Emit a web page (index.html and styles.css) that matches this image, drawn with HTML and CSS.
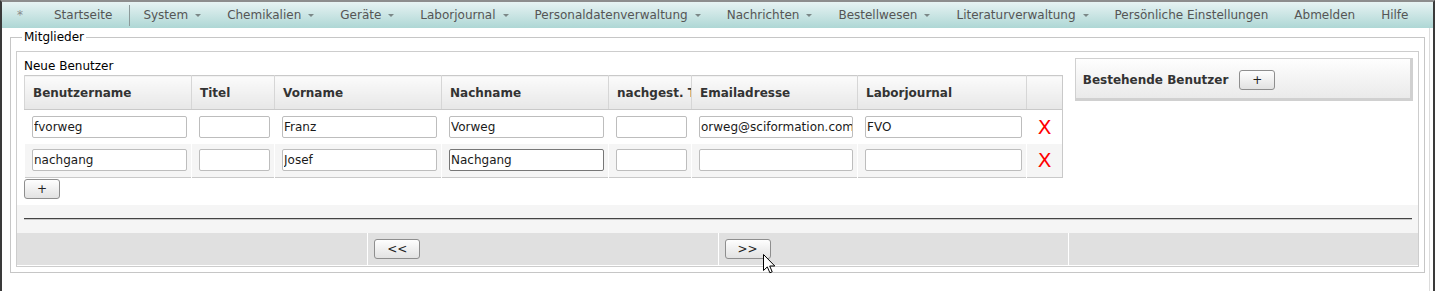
FILE: index.html
```html
<!DOCTYPE html>
<html lang="de">
<head>
    <meta charset="UTF-8">
    <title>Mitglieder</title>
    <link rel="stylesheet" href="styles.css">
</head>
<body>
    <div class="window">
        <div class="menubar">
            <span class="menu-item star">*</span>
            <span class="menu-item home">Startseite</span>
            <span class="menu-item">System<i class="caret"></i></span>
            <span class="menu-item">Chemikalien<i class="caret"></i></span>
            <span class="menu-item">Geräte<i class="caret"></i></span>
            <span class="menu-item">Laborjournal<i class="caret"></i></span>
            <span class="menu-item">Personaldatenverwaltung<i class="caret"></i></span>
            <span class="menu-item">Nachrichten<i class="caret"></i></span>
            <span class="menu-item">Bestellwesen<i class="caret"></i></span>
            <span class="menu-item">Literaturverwaltung<i class="caret"></i></span>
            <span class="menu-item">Persönliche Einstellungen</span>
            <span class="menu-item">Abmelden</span>
            <span class="menu-item">Hilfe</span>
        </div>

        <fieldset class="members">
            <legend>Mitglieder</legend>
            <div class="member-grid">
                <div class="new-users">
                    <div class="caption">Neue Benutzer</div>
                    <table class="user-table">
                        <colgroup>
                            <col style="width:167px">
                            <col style="width:83px">
                            <col style="width:167px">
                            <col style="width:167px">
                            <col style="width:83px">
                            <col style="width:166px">
                            <col style="width:169px">
                            <col style="width:36px">
                        </colgroup>
                        <thead>
                            <tr>
                                <th>Benutzername</th>
                                <th>Titel</th>
                                <th>Vorname</th>
                                <th>Nachname</th>
                                <th>nachgest. Titel</th>
                                <th>Emailadresse</th>
                                <th>Laborjournal</th>
                                <th></th>
                            </tr>
                        </thead>
                        <tbody>
                            <tr>
                                <td><input type="text" value="fvorweg"></td>
                                <td><input type="text" value=""></td>
                                <td><input type="text" value="Franz"></td>
                                <td><input type="text" value="Vorweg"></td>
                                <td><input type="text" value=""></td>
                                <td><input type="text" value="orweg@sciformation.com"></td>
                                <td><input type="text" value="FVO"></td>
                                <td class="remove">X</td>
                            </tr>
                            <tr class="row-alt">
                                <td><input type="text" value="nachgang"></td>
                                <td><input type="text" value=""></td>
                                <td><input type="text" value="Josef"></td>
                                <td><input type="text" class="focused" value="Nachgang"></td>
                                <td><input type="text" value=""></td>
                                <td><input type="text" value=""></td>
                                <td><input type="text" value=""></td>
                                <td class="remove">X</td>
                            </tr>
                        </tbody>
                    </table>
                    <button type="button" class="btn btn-add">+</button>
                </div>

                <div class="existing">
                    <div class="existing-box">
                        <span class="existing-title">Bestehende Benutzer</span>
                        <button type="button" class="btn btn-add">+</button>
                    </div>
                </div>

                <div class="rule-row"><hr></div>

                <div class="pager-cell first"></div>
                <div class="pager-cell"><button type="button" class="btn btn-page">&lt;&lt;</button></div>
                <div class="pager-cell"><button type="button" class="btn btn-page">&gt;&gt;</button></div>
                <div class="pager-cell"></div>
            </div>
        </fieldset>
    </div>

    <svg class="pointer" width="13" height="20" viewBox="0 0 13 20">
        <path d="M0.5 0.5 L0.5 16.5 L4.3 12.9 L6.9 18.8 L9.2 17.8 L6.7 12 L11.8 12 Z" fill="#fff" stroke="#000" stroke-width="1"/>
    </svg>
</body>
</html>
```

FILE: styles.css
```css
* {
    box-sizing: border-box;
}
body {
    margin: 0;
    font-family: "DejaVu Sans", Verdana, sans-serif;
    font-size: 12px;
    color: #111;
    background-color: #fff;
    position: relative;
}
.window {
    height: 291px;
    border-top: 2px solid #8d8d8d;
    border-left: 2px solid #3a3a3a;
    border-right: 2px solid #3a3a3a;
    box-shadow: inset -3px 0 0 #fff, inset -4px 0 0 #dcdcdc;
    overflow: hidden;
}

/* top menu */
.menubar {
    display: flex;
    align-items: center;
    height: 26px;
    padding-left: 2px;
    background: linear-gradient(#e7f3f3, #aed7d5);
    color: #555;
}
.menu-item {
    padding: 0 13px;
    line-height: 26px;
    white-space: nowrap;
}
.menu-item.star {
    padding: 0 18px 0 13px;
    color: #8a8a8a;
}
.menu-item.home {
    line-height: 21px;
    padding-right: 17px;
    border-right: 1px solid #8c9a9a;
}
.caret {
    display: inline-block;
    margin-left: 7px;
    vertical-align: middle;
    border-top: 3px solid #7b8787;
    border-left: 3px solid transparent;
    border-right: 3px solid transparent;
}

/* fieldset */
.members {
    margin: 2px 8px 0 8px;
    padding: 7px 5px 5px 5px;
    border: 1px solid #c6c6c6;
    min-width: 0;
}
.members legend {
    margin-left: 6px;
    padding: 0 2px;
    line-height: 14px;
    color: #000;
}
.member-grid {
    display: grid;
    grid-template-columns: repeat(4, 1fr);
    border: 1px solid #cdcdcd;
}
.new-users {
    grid-column: span 3;
    padding: 7px 0 6px 7px;
}
.caption {
    line-height: 14px;
    margin-bottom: 2px;
    color: #000;
}

/* users table */
.user-table {
    border-collapse: collapse;
    table-layout: fixed;
    width: 1039px;
    border: 1px solid #c9c9c9;
}
.user-table th {
    height: 34px;
    padding: 1px 8px 0 8px;
    text-align: left;
    font-weight: bold;
    color: #333;
    white-space: nowrap;
    overflow: hidden;
    background: linear-gradient(#fbfbfb, #e7e7e7);
    border-left: 1px solid #d6d6d6;
    border-bottom: 1px solid #c9c9c9;
}
.user-table td {
    height: 34px;
    padding: 0 4px 0 7px;
    border-left: 1px solid #fff;
    vertical-align: middle;
}
.user-table .row-alt td {
    background-color: #f5f5f5;
}
.user-table input {
    display: block;
    width: 100%;
    height: 22px;
    padding: 0 0 0 1px;
    border: 1px solid #bdbdbd;
    border-radius: 2px;
    background-color: #fff;
    font-family: "DejaVu Sans", Verdana, sans-serif;
    font-size: 12px;
    color: #1a1a1a;
    outline: none;
}
.user-table input.focused {
    border-color: #777;
}
.user-table td.remove {
    padding: 0;
    text-align: center;
    font-size: 20px;
    line-height: 1;
    color: #f00;
}

/* buttons */
.btn {
    height: 20px;
    padding: 0;
    border: 1px solid #8e8e8e;
    border-radius: 3px;
    background: linear-gradient(#fefefe, #e2e2e2);
    font-family: "DejaVu Sans", Verdana, sans-serif;
    font-size: 12px;
    color: #222;
    cursor: pointer;
}
.btn-add {
    display: block;
    width: 36px;
}
.new-users .btn-add {
    margin-top: 1px;
}
.btn-page {
    width: 46px;
}

/* existing users */
.existing {
    padding: 6px 5px 0 7px;
}
.existing-box {
    display: flex;
    align-items: center;
    gap: 11px;
    padding: 11px 8px 8px 7px;
    border: 1px solid #d0d0d0;
    border-right-width: 3px;
    border-bottom-width: 3px;
    background: linear-gradient(#fefefe, #eaeaea);
}
.existing-title {
    font-weight: bold;
    color: #333;
}

/* divider + pager */
.rule-row {
    grid-column: span 4;
    padding: 13px 6px 13px 7px;
    background-color: #f5f5f5;
}
.rule-row hr {
    height: 0;
    margin: 0;
    border: 0;
    border-top: 1px solid #444;
    border-bottom: 1px solid #c8c8c8;
}
.pager-cell {
    height: 33px;
    padding: 6px 0 0 6px;
    background-color: #e0e0e0;
    border-left: 1px solid #fff;
    border-bottom: 1px solid #fff;
}
.pager-cell.first {
    border-left: 0;
}

.pointer {
    position: absolute;
    left: 763px;
    top: 254px;
}
```
